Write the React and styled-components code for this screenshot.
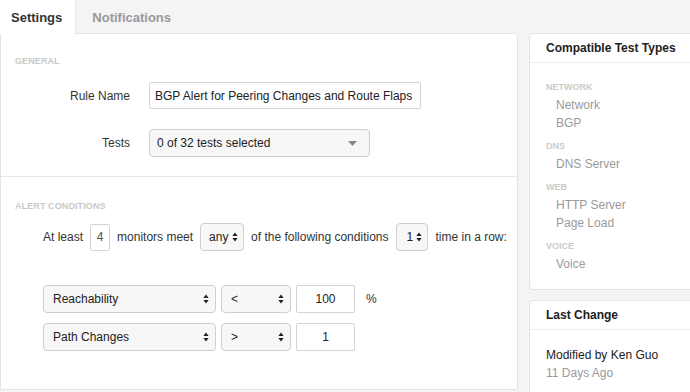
import styled, { createGlobalStyle } from 'styled-components'

const GlobalStyle = createGlobalStyle`
    html, body {
        margin: 0;
        padding: 0;
        background: #f4f4f4;
        font-family: "Liberation Sans", Arial, sans-serif;
        font-size: 12px;
        color: #333;
        overflow: hidden;
    }
`

const Page = styled.div`
    display: flex;
    align-items: flex-start;
    width: 690px;
    height: 392px;
    overflow: hidden;
`

const LeftCol = styled.div`
    width: 518px;
    flex-shrink: 0;
`

const TabBar = styled.div`
    display: flex;
    height: 33px;
`

const Tab = styled.div`
    display: flex;
    align-items: center;
    height: ${p => p.$active ? '34px' : '32px'};
    padding: 0 ${p => p.$active ? '13px' : '16px'} 0 ${p => p.$active ? '11px' : '16px'};
    font-weight: bold;
    font-size: 13px;
    color: ${p => p.$active ? '#333' : '#999'};
    background: ${p => p.$active ? '#fff' : '#f4f4f4'};
    border-left: ${p => p.$active ? 'none' : '1px solid #e6e6e6'};
    margin-top: ${p => p.$active ? '0' : '1px'};
    position: relative;
    z-index: 1;
`

const Panel = styled.div`
    background: #fff;
    border: 1px solid #e4e4e4;
    border-radius: 0 4px 0 0;
    height: 357px;
    box-sizing: border-box;
`

const Section = styled.div`
    padding: ${p => p.$pt}px 0 0 14px;
    height: ${p => p.$h}px;
    box-sizing: border-box;
    border-bottom: ${p => p.$divider ? '1px solid #e8e8e8' : 'none'};
`

const SectionLabel = styled.div`
    font-size: 9px;
    font-weight: bold;
    color: #c9c9c9;
    letter-spacing: 0.1px;
`

const FormRow = styled.div`
    display: flex;
    align-items: center;
    margin-top: ${p => p.$mt}px;
`

const FieldLabel = styled.div`
    width: 115px;
    text-align: right;
    padding-right: 19px;
    font-size: 12px;
    color: #333;
`

const TextBox = styled.div`
    box-sizing: border-box;
    width: ${p => p.$w}px;
    height: ${p => p.$h || 27}px;
    border: 1px solid #d4d4d4;
    border-radius: 2px;
    background: #fff;
    display: flex;
    align-items: center;
    justify-content: ${p => p.$center ? 'center' : 'flex-start'};
    padding-left: ${p => p.$center ? 0 : 5}px;
    font-size: 12px;
    color: ${p => p.$muted ? '#555' : '#222'};
    white-space: nowrap;
`

const SelectBox = styled.div`
    box-sizing: border-box;
    width: ${p => p.$w}px;
    height: ${p => p.$h || 28}px;
    border: 1px solid #cfcfcf;
    border-radius: 4px;
    background: #f7f7f7;
    display: flex;
    align-items: center;
    justify-content: space-between;
    padding: 0 ${p => p.$pr || 6}px 0 ${p => p.$pl || 9}px;
    font-size: 12px;
    color: #222;
    white-space: nowrap;
`

const Sentence = styled.div`
    display: flex;
    align-items: center;
    gap: 7px;
    margin: 12px 0 0 28px;
    font-size: 12px;
    white-space: nowrap;
`

const Conditions = styled.div`
    display: flex;
    flex-direction: column;
    gap: 10px;
    margin: 34px 0 0 28px;
`

const CondRow = styled.div`
    display: flex;
    align-items: center;
    gap: 5px;
`

const Unit = styled.span`
    margin-left: 6px;
    font-size: 12px;
`

const RightCol = styled.div`
    margin-left: 11px;
    padding-top: 33px;
    display: flex;
    flex-direction: column;
    gap: 10px;
    width: 165px;
    flex-shrink: 0;
`

const Card = styled.div`
    background: #fff;
    border: 1px solid #e4e4e4;
    border-radius: 4px;
    height: ${p => p.$h}px;
    box-sizing: border-box;
`

const CardHeader = styled.div`
    height: 28px;
    display: flex;
    align-items: center;
    padding-left: 16px;
    font-weight: bold;
    font-size: 12px;
    color: #222;
    border-bottom: 1px solid #ececec;
`

const CardBody = styled.div`
    padding: ${p => p.$pt}px 0 0 16px;
`

const Group = styled.div`
    margin-bottom: 5px;
`

const GroupLabel = styled.div`
    font-size: 9px;
    font-weight: bold;
    color: #cbcbcb;
    line-height: 18px;
`

const Item = styled.div`
    font-size: 12px;
    color: #9a9a9a;
    padding-left: 10px;
    line-height: 18px;
`

const ChangeBy = styled.div`
    font-size: 12px;
    color: #222;
    line-height: 18px;
`

const ChangeWhen = styled.div`
    font-size: 12px;
    color: #9a9a9a;
    line-height: 18px;
`

function UpDown() {
    return (
        <svg width="6" height="10" viewBox="0 0 6 10">
            <path d="M3 0.5 L5.6 4 L0.4 4 Z" fill="#222" />
            <path d="M3 9.5 L5.6 6 L0.4 6 Z" fill="#222" />
        </svg>
    )
}

function Caret() {
    return (
        <svg width="9" height="5" viewBox="0 0 9 5">
            <path d="M0 0 L9 0 L4.5 5 Z" fill="#888" />
        </svg>
    )
}

const testTypes = [
    { label: 'NETWORK', items: ['Network', 'BGP'] },
    { label: 'DNS', items: ['DNS Server'] },
    { label: 'WEB', items: ['HTTP Server', 'Page Load'] },
    { label: 'VOICE', items: ['Voice'] },
]

export default function App() {
    return (
        <>
            <GlobalStyle />
            <Page>
                <LeftCol>
                    <TabBar>
                        <Tab $active>Settings</Tab>
                        <Tab>Notifications</Tab>
                    </TabBar>
                    <Panel>
                        <Section $h={143} $pt={22} $divider>
                            <SectionLabel>GENERAL</SectionLabel>
                            <FormRow $mt={16}>
                                <FieldLabel>Rule Name</FieldLabel>
                                <TextBox $w={272}>BGP Alert for Peering Changes and Route Flaps</TextBox>
                            </FormRow>
                            <FormRow $mt={20}>
                                <FieldLabel>Tests</FieldLabel>
                                <SelectBox $w={221} $h={28} $pl={7} $pr={12}>
                                    0 of 32 tests selected
                                    <Caret />
                                </SelectBox>
                            </FormRow>
                        </Section>
                        <Section $h={212} $pt={24}>
                            <SectionLabel>ALERT CONDITIONS</SectionLabel>
                            <Sentence>
                                At least
                                <TextBox $w={20} $h={27} $center $muted>4</TextBox>
                                monitors meet
                                <SelectBox $w={44} $pl={8} $pr={5}>any <UpDown /></SelectBox>
                                of the following conditions
                                <SelectBox $w={32} $pl={9} $pr={5} style={{ marginLeft: 1 }}>1 <UpDown /></SelectBox>
                                time in a row:
                            </Sentence>
                            <Conditions>
                                <CondRow>
                                    <SelectBox $w={173}>Reachability <UpDown /></SelectBox>
                                    <SelectBox $w={70}>&lt; <UpDown /></SelectBox>
                                    <TextBox $w={59} $h={28} $center>100</TextBox>
                                    <Unit>%</Unit>
                                </CondRow>
                                <CondRow>
                                    <SelectBox $w={173}>Path Changes <UpDown /></SelectBox>
                                    <SelectBox $w={70}>&gt; <UpDown /></SelectBox>
                                    <TextBox $w={59} $h={28} $center>1</TextBox>
                                </CondRow>
                            </Conditions>
                        </Section>
                    </Panel>
                </LeftCol>
                <RightCol>
                    <Card $h={257}>
                        <CardHeader>Compatible Test Types</CardHeader>
                        <CardBody $pt={15}>
                            {testTypes.map(g => (
                                <Group key={g.label}>
                                    <GroupLabel>{g.label}</GroupLabel>
                                    {g.items.map(i => <Item key={i}>{i}</Item>)}
                                </Group>
                            ))}
                        </CardBody>
                    </Card>
                    <Card $h={110}>
                        <CardHeader>Last Change</CardHeader>
                        <CardBody $pt={16}>
                            <ChangeBy>Modified by Ken Guo</ChangeBy>
                            <ChangeWhen>11 Days Ago</ChangeWhen>
                        </CardBody>
                    </Card>
                </RightCol>
            </Page>
        </>
    )
}
